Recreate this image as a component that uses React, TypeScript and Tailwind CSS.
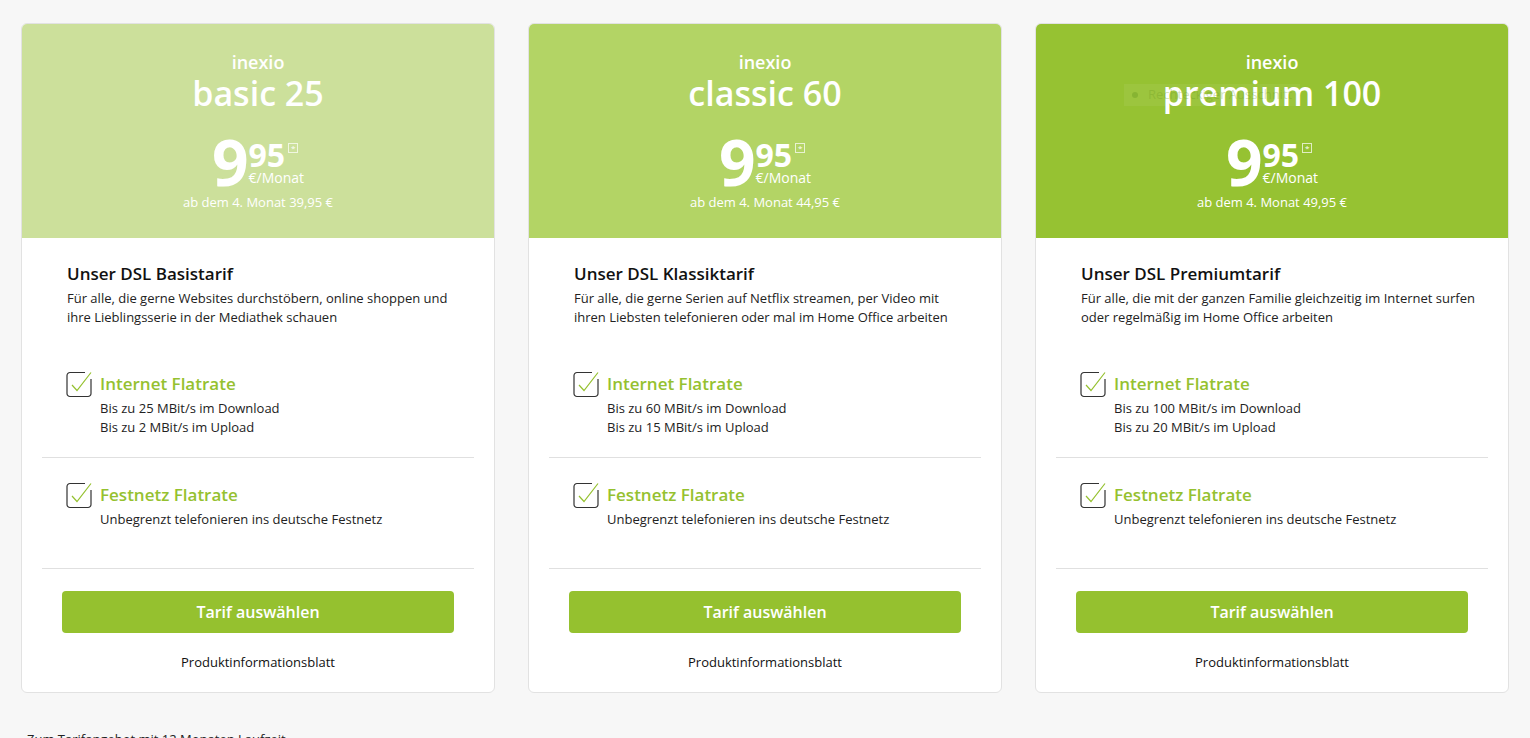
import React from "react";

const FONT = { fontFamily: '"Open Sans", "Noto Sans", sans-serif' };

type Plan = {
  name: string;
  head: string;
  later: string;
  title: string;
  desc: [string, string];
  down: string;
  up: string;
  overlay?: boolean;
};

const plans: Plan[] = [
  {
    name: "basic 25",
    head: "bg-[#cce09b]",
    later: "39,95",
    title: "Unser DSL Basistarif",
    desc: [
      "Für alle, die gerne Websites durchstöbern, online shoppen und",
      "ihre Lieblingsserie in der Mediathek schauen",
    ],
    down: "25",
    up: "2",
  },
  {
    name: "classic 60",
    head: "bg-[#b3d465]",
    later: "44,95",
    title: "Unser DSL Klassiktarif",
    desc: [
      "Für alle, die gerne Serien auf Netflix streamen, per Video mit",
      "ihren Liebsten telefonieren oder mal im Home Office arbeiten",
    ],
    down: "60",
    up: "15",
  },
  {
    name: "premium 100",
    head: "bg-[#96c232]",
    later: "49,95",
    title: "Unser DSL Premiumtarif",
    desc: [
      "Für alle, die mit der ganzen Familie gleichzeitig im Internet surfen",
      "oder regelmäßig im Home Office arbeiten",
    ],
    down: "100",
    up: "20",
    overlay: true,
  },
];

function Check() {
  return (
    <svg width="28" height="28" viewBox="0 0 28 28" fill="none" className="shrink-0">
      <path
        d="M19 2.5 H4 A3 3 0 0 0 1 5.5 V23.5 A3 3 0 0 0 4 26.5 H22 A3 3 0 0 0 25 23.5 V9"
        stroke="#333"
        strokeWidth="1.2"
      />
      <path d="M6 15 L11 20.5 L25 2.5" stroke="#95c12f" strokeWidth="1.2" />
    </svg>
  );
}

function Feature({ title, lines }: { title: string; lines: string[] }) {
  return (
    <div className="h-[110px] pt-[25px] px-[24px] flex gap-[6px]">
      <div className="-mt-[2px]">
        <Check />
      </div>
      <div>
        <div className="text-[17px] leading-[24px] font-semibold text-[#95c12f]">{title}</div>
        <div className="mt-[3px] text-[13px] leading-[19px] text-[#222] whitespace-nowrap">
          {lines.map((l) => (
            <div key={l}>{l}</div>
          ))}
        </div>
      </div>
    </div>
  );
}

function Card({ p }: { p: Plan }) {
  return (
    <div className="bg-white border border-[#e2e2e2] rounded-[6px] overflow-hidden flex flex-col">
      <div className={`${p.head} h-[214px] flex flex-col items-center text-white relative`}>
        <div className="mt-[26px] text-[18px] leading-[24px] font-semibold">inexio</div>
        <div className="text-[34px] leading-[38px] font-semibold">{p.name}</div>
        <div className="mt-[23px] flex items-start">
          <div className="text-[64px] leading-[54px] font-bold tracking-[-1px]">9</div>
          <div className="flex flex-col ml-[1px] mt-[5px]">
            <div className="flex items-start">
              <span className="text-[32px] leading-[30px] font-bold">95</span>
              <span className="ml-[3px] mt-[3px] w-[10px] h-[10px] border border-white/70 text-[8px] leading-[8px] flex items-center justify-center">
                *
              </span>
            </div>
            <div className="text-[14px] leading-[18px] -mt-[1px]">€/Monat</div>
          </div>
        </div>
        <div className="mt-[4px] text-[13px] leading-[18px]">ab dem 4. Monat {p.later} €</div>
        {p.overlay && (
          <div className="absolute left-[88px] top-[60px] w-[176px] h-[22px] bg-white/[0.06] flex items-center gap-[10px] pl-[8px] pointer-events-none">
            <span className="w-[6px] h-[6px] rounded-full bg-[#6a9a20]/40" />
            <span className="text-[13px] text-[#6a9a20]/30">Rechteckiger Ausschnitt</span>
          </div>
        )}
      </div>
      <div className="px-[20px] pt-[24px] pb-[20px] flex flex-col">
        <div className="px-[25px]">
          <div className="text-[17px] leading-[24px] font-semibold text-[#111]">{p.title}</div>
          <div className="mt-[3px] text-[13px] leading-[19px] text-[#222] whitespace-nowrap">
            <div>{p.desc[0]}</div>
            <div>{p.desc[1]}</div>
          </div>
        </div>
        <div className="mt-[20px]">
          <Feature
            title="Internet Flatrate"
            lines={[`Bis zu ${p.down} MBit/s im Download`, `Bis zu ${p.up} MBit/s im Upload`]}
          />
          <div className="h-px bg-[#e0e0e0]" />
          <Feature title="Festnetz Flatrate" lines={["Unbegrenzt telefonieren ins deutsche Festnetz"]} />
          <div className="h-px bg-[#e0e0e0]" />
        </div>
        <div className="px-[20px] mt-[22px]">
          <button className="w-full h-[42px] rounded-[4px] bg-[#95c12f] text-white text-[16px] font-semibold">
            Tarif auswählen
          </button>
        </div>
        <div className="mt-[19px] text-center text-[13px] leading-[20px] text-[#111]">Produktinformationsblatt</div>
      </div>
    </div>
  );
}

export default function App() {
  return (
    <div style={FONT} className="min-h-screen bg-[#f7f7f7] pt-[23px] px-[21px]">
      <div className="grid grid-cols-3 gap-[33px]">
        {plans.map((p) => (
          <Card key={p.name} p={p} />
        ))}
      </div>
      <div className="mt-[36px] pl-[6px] text-[13px] leading-[20px] text-[#222]">
        Zum Tarifangebot mit 12 Monaten Laufzeit
      </div>
    </div>
  );
}
